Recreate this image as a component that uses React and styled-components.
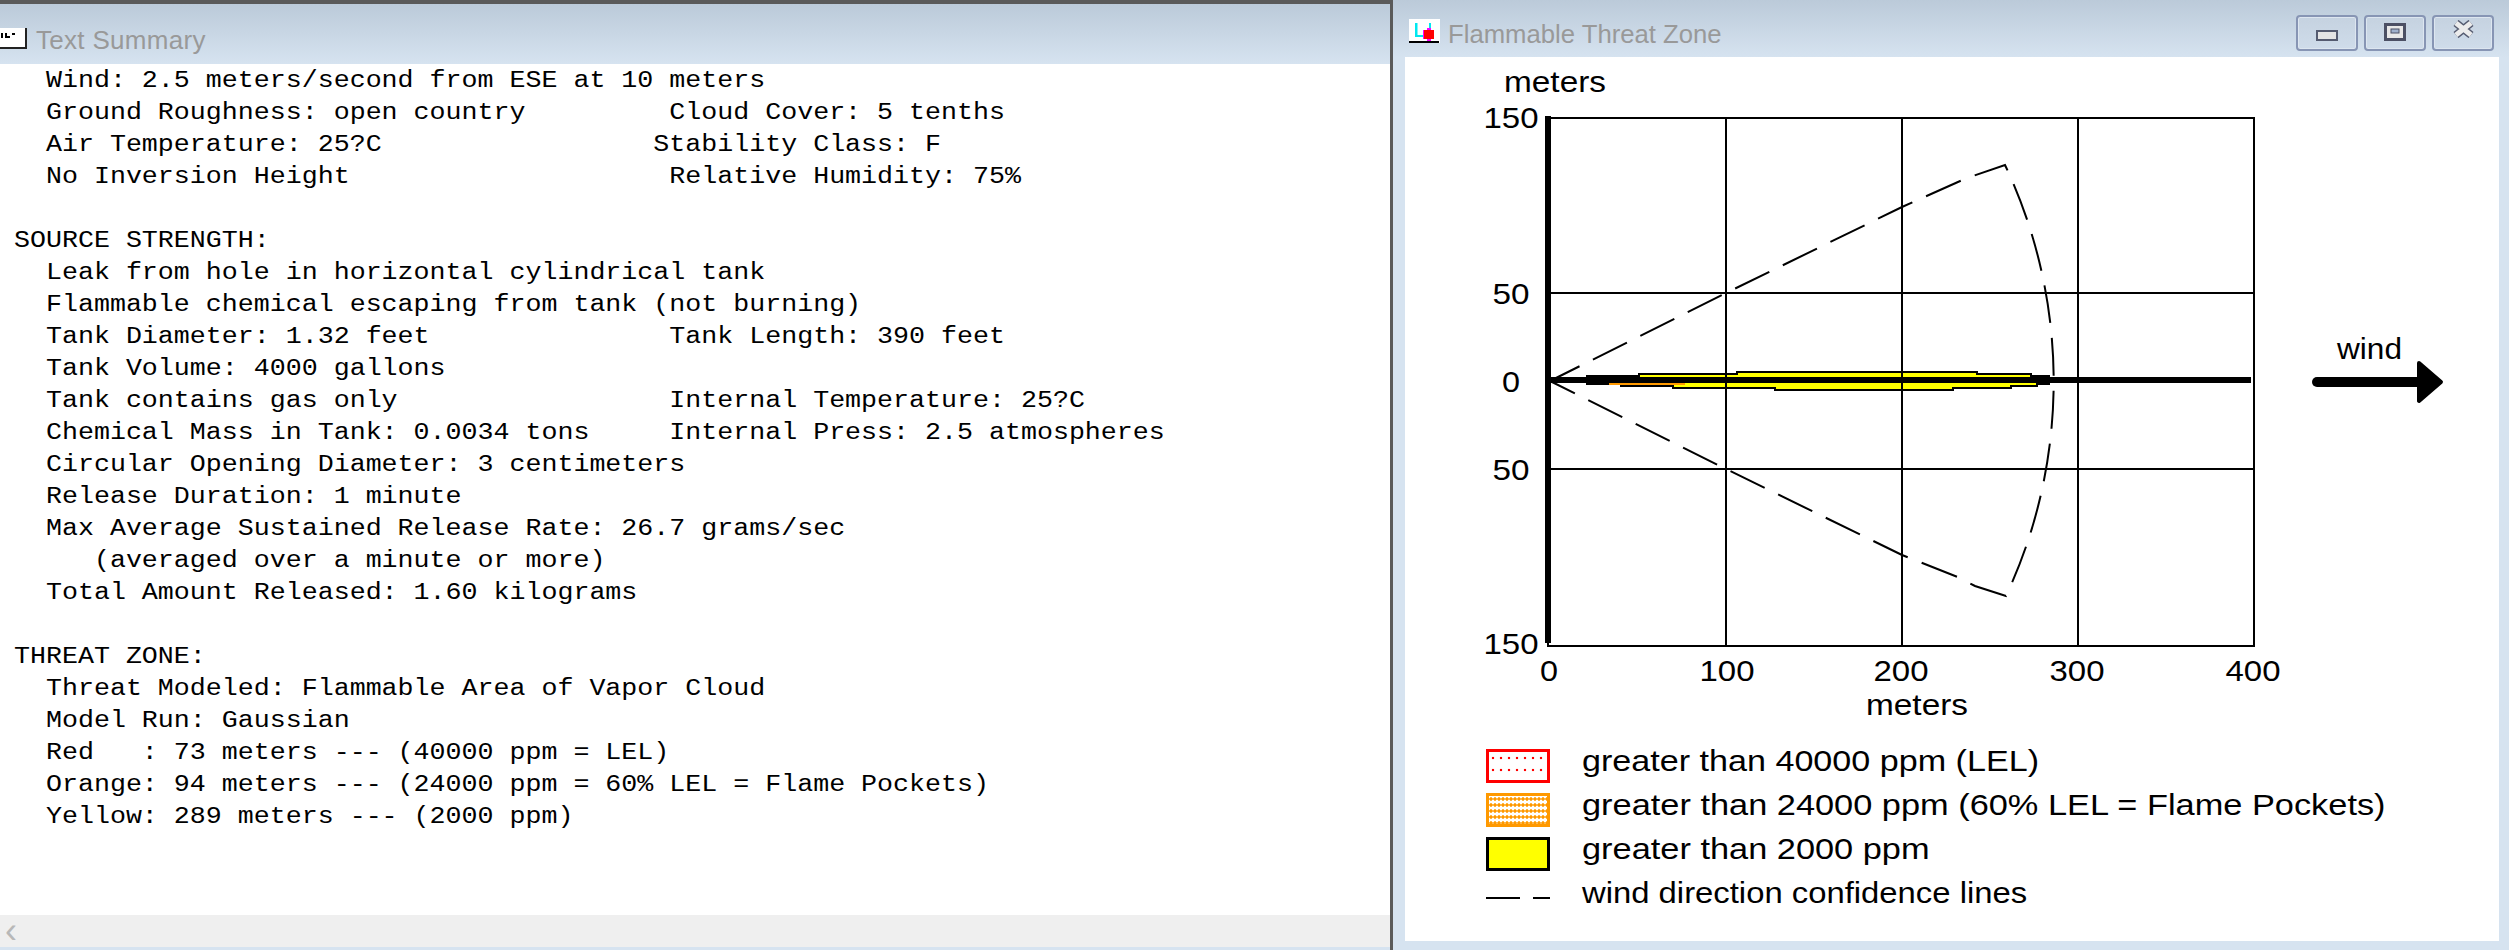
import React from 'react'
import styled, { createGlobalStyle } from 'styled-components'

const SUMMARY = `  Wind: 2.5 meters/second from ESE at 10 meters
  Ground Roughness: open country         Cloud Cover: 5 tenths
  Air Temperature: 25?C                 Stability Class: F
  No Inversion Height                    Relative Humidity: 75%

SOURCE STRENGTH:
  Leak from hole in horizontal cylindrical tank
  Flammable chemical escaping from tank (not burning)
  Tank Diameter: 1.32 feet               Tank Length: 390 feet
  Tank Volume: 4000 gallons
  Tank contains gas only                 Internal Temperature: 25?C
  Chemical Mass in Tank: 0.0034 tons     Internal Press: 2.5 atmospheres
  Circular Opening Diameter: 3 centimeters
  Release Duration: 1 minute
  Max Average Sustained Release Rate: 26.7 grams/sec
     (averaged over a minute or more)
  Total Amount Released: 1.60 kilograms

THREAT ZONE:
  Threat Modeled: Flammable Area of Vapor Cloud
  Model Run: Gaussian
  Red   : 73 meters --- (40000 ppm = LEL)
  Orange: 94 meters --- (24000 ppm = 60% LEL = Flame Pockets)
  Yellow: 289 meters --- (2000 ppm)`

const GRID_X = [1726, 1902, 2078]
const GRID_Y = [293, 469]
const Y_LABELS = [['150', 128, 55], ['50', 304, 37], ['0', 392, 18], ['50', 480, 37], ['150', 654, 55]]
const X_LABELS = [['0', 1549, 18], ['100', 1727, 55], ['200', 1901, 55], ['300', 2077, 55], ['400', 2253, 55]]
const PLUME = 'M1601 376H1639V374H1737V372H1977V374H2031V376H2049V384H2037V386H2011V388H1953V390H1775V388H1673V386H1621V384H1587V376Z'
const CONFIDENCE = 'M1550 381L1726 293L1902 207L1967 178L2005 165A506 506 0 0 1 2006 596L1975 586L1960 578L1902 555L1726 469L1550 381'

const LEGEND = [
  { kind: 'red', text: 'greater than 40000 ppm (LEL)', stretch: 1.137 },
  { kind: 'orange', text: 'greater than 24000 ppm (60% LEL = Flame Pockets)', stretch: 1.145 },
  { kind: 'yellow', text: 'greater than 2000 ppm', stretch: 1.145 },
  { kind: 'dash', text: 'wind direction confidence lines', stretch: 1.094 },
]

function TextIcon() {
  return (
    <svg width="27" height="21" viewBox="0 0 27 21">
      <rect width="27" height="21" fill="#fff" />
      <rect x="25" width="2" height="21" fill="#222" />
      <rect y="19" width="27" height="2" fill="#222" />
      <path d="M1 5h2v5H1zM5 5h2v5H5zM7 8h3v2H7zM12 5h3v2h-3z" fill="#000" />
    </svg>
  )
}

function ThreatIcon() {
  return (
    <svg width="31" height="24" viewBox="0 0 31 24">
      <rect width="31" height="24" fill="#fff" />
      <path d="M6 4h2.5v12H20v2H6zM20 4h2v7h-2z" fill="#00e8f0" />
      <path d="M18 9h4v2h3v9h-3v3h-4v-3h-4v-9h4z" fill="#f0f" />
      <rect x="15" y="11" width="10" height="9" fill="#f00" />
      <rect y="22" width="30" height="2" fill="#000" />
    </svg>
  )
}

function MinimizeGlyph() {
  return (
    <svg width="22" height="11" viewBox="0 0 22 11">
      <rect x="1" y="1" width="20" height="9" fill="#e4e4e4" stroke="#555b70" strokeWidth="2" />
    </svg>
  )
}

function RestoreGlyph() {
  return (
    <svg width="22" height="18" viewBox="0 0 22 18">
      <rect x="1.5" y="1.5" width="19" height="15" fill="#e8e8e8" stroke="#4c5064" strokeWidth="3" />
      <rect x="7" y="6" width="8" height="4" fill="#9fb0cc" stroke="#4c5064" />
    </svg>
  )
}

function CloseGlyph() {
  return (
    <svg width="23" height="18" viewBox="0 0 23 18">
      <path d="M4 3l15 12M19 3L4 15" fill="none" stroke="#555b70" strokeWidth="8" />
      <path d="M4 3l15 12M19 3L4 15" fill="none" stroke="#ececec" strokeWidth="5" />
    </svg>
  )
}

function Chart() {
  return (
    <ChartSvg viewBox="1405 57 1094 675">
      <ChartLabel x="1504" y="92" textLength="102" lengthAdjust="spacingAndGlyphs">meters</ChartLabel>
      {Y_LABELS.map(([label, y, width]) => (
        <ChartLabel key={y} x="1511" y={y} textAnchor="middle" textLength={width} lengthAdjust="spacingAndGlyphs">{label}</ChartLabel>
      ))}
      {X_LABELS.map(([label, x, width]) => (
        <ChartLabel key={x} x={x} y="681" textAnchor="middle" textLength={width} lengthAdjust="spacingAndGlyphs">{label}</ChartLabel>
      ))}
      <ChartLabel x="1866" y="715" textLength="102" lengthAdjust="spacingAndGlyphs">meters</ChartLabel>

      <path d={PLUME} fill="#ff0" stroke="#000" strokeWidth="2" shapeRendering="crispEdges" />
      <rect x="1609" y="383" width="76" height="2" fill="#ff9900" />

      <g stroke="#000" strokeWidth="2" shapeRendering="crispEdges">
        {GRID_X.map((x) => <line key={x} x1={x} y1="118" x2={x} y2="646" />)}
        {GRID_Y.map((y) => <line key={y} x1="1550" y1={y} x2="2254" y2={y} />)}
        <rect x="1548" y="118" width="706" height="528" fill="none" />
      </g>
      <rect x="1545" y="116" width="6" height="527" fill="#000" />
      <rect x="1550" y="377" width="701" height="6" fill="#000" />

      <path d={CONFIDENCE} fill="none" stroke="#000" strokeWidth="2" strokeDasharray="38 15" strokeDashoffset="5" />

      <ChartLabel x="2337" y="359" textLength="65" lengthAdjust="spacingAndGlyphs">wind</ChartLabel>
      <path d="M2317 382H2420" stroke="#000" strokeWidth="10" strokeLinecap="round" />
      <path d="M2419 363L2441 382L2419 401Z" fill="#000" stroke="#000" strokeWidth="4" strokeLinejoin="round" />
    </ChartSvg>
  )
}

export default function App() {
  return (
    <>
      <GlobalStyle />
      <Desktop>
        <TextWindow>
          <TextTitleBar>
            <TextIcon />
            <TextTitle>Text Summary</TextTitle>
          </TextTitleBar>
          <TextBody>
            <Summary>{SUMMARY}</Summary>
          </TextBody>
          <ScrollBar>
            <ScrollArrow>‹</ScrollArrow>
          </ScrollBar>
        </TextWindow>

        <ThreatWindow>
          <ThreatTitleBar>
            <ThreatIcon />
            <ThreatTitle>Flammable Threat Zone</ThreatTitle>
            <Controls>
              <ControlButton $align="flex-end"><MinimizeGlyph /></ControlButton>
              <ControlButton $align="flex-end"><RestoreGlyph /></ControlButton>
              <ControlButton $align="center"><CloseGlyph /></ControlButton>
            </Controls>
          </ThreatTitleBar>
          <ThreatBody>
            <Chart />
            <Legend>
              {LEGEND.map((item) => (
                <LegendRow key={item.kind}>
                  {item.kind === 'dash' ? (
                    <DashSwatch>
                      <DashLong />
                      <DashShort />
                    </DashSwatch>
                  ) : (
                    <Swatch $kind={item.kind} />
                  )}
                  <LegendText $stretch={item.stretch}>{item.text}</LegendText>
                </LegendRow>
              ))}
            </Legend>
          </ThreatBody>
        </ThreatWindow>
      </Desktop>
    </>
  )
}

const GlobalStyle = createGlobalStyle`
  html, body {
    margin: 0;
    padding: 0;
    background: #d6e3f0;
    overflow: hidden;
  }
`

const Desktop = styled.div`
  display: flex;
  width: 2509px;
  height: 950px;
  overflow: hidden;
  background: #d6e3f0;
`

const TextWindow = styled.section`
  display: flex;
  flex-direction: column;
  box-sizing: border-box;
  width: 1393px;
  height: 950px;
  flex-shrink: 0;
  border-top: 4px solid #5a5a5a;
  border-right: 3px solid #5a5a5a;
  padding-bottom: 3px;
`

const TextTitleBar = styled.header`
  display: flex;
  align-items: flex-start;
  gap: 9px;
  box-sizing: border-box;
  height: 60px;
  padding-top: 24px;
  background: linear-gradient(#bbcad9, #d6e3f0);
`

const TextTitle = styled.h1`
  margin: -3px 0 0;
  color: #999;
  font-family: "Liberation Sans", Arial, sans-serif;
  font-size: 26px;
  font-weight: 400;
  line-height: 30px;
  letter-spacing: 0.3px;
`

const TextBody = styled.div`
  flex: 1;
  background: #fff;
  overflow: hidden;
`

const Summary = styled.pre`
  margin: 0;
  padding: 1px 0 0 14px;
  color: #000;
  font-family: "Liberation Mono", "Courier New", monospace;
  font-size: 23px;
  line-height: 32px;
  transform: scaleX(1.158);
  transform-origin: 14px 0;
`

const ScrollBar = styled.div`
  display: flex;
  align-items: center;
  height: 32px;
  background: #efefef;
`

const ScrollArrow = styled.span`
  padding-left: 5px;
  color: #b8b8b8;
  font-family: "Liberation Sans", Arial, sans-serif;
  font-size: 36px;
  line-height: 32px;
`

const ThreatWindow = styled.section`
  display: flex;
  flex: 1;
  flex-direction: column;
  min-width: 0;
`

const ThreatTitleBar = styled.header`
  display: flex;
  align-items: flex-start;
  gap: 8px;
  box-sizing: border-box;
  height: 57px;
  padding: 19px 15px 0 16px;
  background: linear-gradient(#bbcad9, #d6e3f0);
`

const ThreatTitle = styled.h2`
  margin: 1px 0 0;
  color: #999;
  font-family: "Liberation Sans", Arial, sans-serif;
  font-size: 25.7px;
  font-weight: 400;
  line-height: 28px;
`

const Controls = styled.div`
  display: flex;
  gap: 6px;
  margin: -4px 0 0 auto;
`

const ControlButton = styled.div`
  display: flex;
  align-items: ${(p) => p.$align};
  justify-content: center;
  box-sizing: border-box;
  width: 62px;
  height: 36px;
  padding-bottom: 8px;
  border: 2px solid #8795b4;
  border-radius: 4px;
  box-shadow: inset 0 0 0 1px #dde6f0;
  background: linear-gradient(#c5d2e0, #cfdcea);
`

const ThreatBody = styled.div`
  flex: 1;
  margin: 0 10px 9px 12px;
  background: #fff;
`

const ChartSvg = styled.svg`
  display: block;
  width: 1094px;
  height: 675px;
`

const ChartLabel = styled.text`
  fill: #000;
  font-family: "Liberation Sans", Arial, sans-serif;
  font-size: 30px;
`

const Legend = styled.ul`
  display: flex;
  flex-direction: column;
  gap: 10px;
  margin: 0;
  padding: 17px 0 0 81px;
  list-style: none;
`

const LegendRow = styled.li`
  display: flex;
  align-items: center;
  gap: 32px;
  height: 34px;
`

const swatchStyles = {
  red: `
    border-color: #f00;
    background: #fff radial-gradient(circle, #f00 1.3px, transparent 1.6px) 0 0 / 8px 12px;
  `,
  orange: `
    border-color: #ff9900;
    background: #fff radial-gradient(circle, #ff9900 1.5px, transparent 1.8px) 0 0 / 4px 6px;
  `,
  yellow: `
    border-color: #000;
    background: #ff0;
  `,
}

const Swatch = styled.span`
  box-sizing: border-box;
  flex-shrink: 0;
  width: 64px;
  height: 34px;
  border: 3px solid;
  ${(p) => swatchStyles[p.$kind]}
`

const DashSwatch = styled.span`
  display: flex;
  justify-content: space-between;
  flex-shrink: 0;
  width: 64px;
`

const DashLong = styled.span`
  width: 34px;
  height: 2px;
  background: #000;
`

const DashShort = styled.span`
  width: 17px;
  height: 2px;
  background: #000;
`

const LegendText = styled.span`
  margin-bottom: 11px;
  color: #000;
  font-family: "Liberation Sans", Arial, sans-serif;
  font-size: 30px;
  line-height: 34px;
  white-space: nowrap;
  transform: scaleX(${(p) => p.$stretch});
  transform-origin: left center;
`
